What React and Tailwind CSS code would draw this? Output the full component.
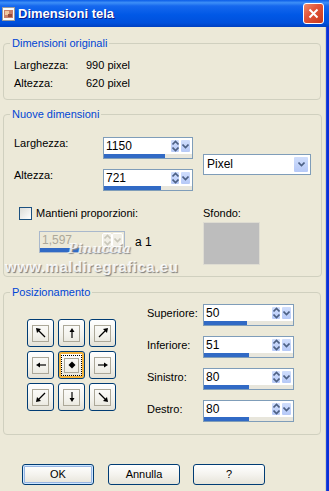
import React from 'react'

function Chevron({ up }) {
  return (
    <svg width="7" height="5" viewBox="0 0 7 5" className="block">
      <path d={up ? 'M0.5 4.5 L3.5 1.5 L6.5 4.5' : 'M0.5 0.5 L3.5 3.5 L6.5 0.5'} fill="none" stroke="currentColor" strokeWidth="1.6" />
    </svg>
  )
}

function UpDownBtn({ disabled }) {
  return (
    <div className={`w-[10px] my-[1px] flex flex-col items-center justify-center gap-[2px] rounded-[2px] border border-white ${disabled ? 'bg-[#f1efe6] text-[#c9c7ba]' : 'bg-[linear-gradient(180deg,#d0defc,#b6c9f7)] text-[#4d6185]'}`}>
      <Chevron up />
      <Chevron />
    </div>
  )
}

function DropBtn({ disabled, className = '' }) {
  return (
    <div className={`flex items-center justify-center rounded-[2px] border border-white ${disabled ? 'bg-[#f1efe6] text-[#c9c7ba]' : 'bg-[linear-gradient(180deg,#d0defc,#b6c9f7)] text-[#4d6185]'} ${className}`}>
      <Chevron />
    </div>
  )
}

function Spin({ value, fill, className = '', disabled = false }) {
  return (
    <div className={`flex flex-col h-[22px] border ${disabled ? 'border-[#a9b8cc] bg-[#ece9d8]' : 'border-[#7f9db9] bg-white'} ${className}`}>
      <div className="flex flex-1 min-h-0 pr-[1px]">
        <div className={`flex-1 pl-[2px] text-[12px] leading-[17px] ${disabled ? 'text-[#aca899]' : 'text-black'}`}>{value}</div>
        <UpDownBtn disabled={disabled} />
        <DropBtn disabled={disabled} className="w-[11px] my-[1px]" />
      </div>
      <div className="h-[4px] bg-[#e8e6dc]">
        <div className="h-full bg-[#316ac5]" style={{ width: fill }} />
      </div>
    </div>
  )
}

function Arrow({ dir }) {
  const shapes = {
    nw: ['M10 10 L2.5 2.5', '1,1 6,2 2,6'],
    n: ['M6 11 L6 3', '6,1 3.5,5 8.5,5'],
    ne: ['M2 10 L9.5 2.5', '11,1 6,2 10,6'],
    w: ['M11 6 L3 6', '1,6 5,3.5 5,8.5'],
    e: ['M1 6 L9 6', '11,6 7,3.5 7,8.5'],
    sw: ['M10 2 L2.5 9.5', '1,11 2,6 6,10'],
    s: ['M6 1 L6 9', '6,11 3.5,7 8.5,7'],
    se: ['M2 2 L9.5 9.5', '11,11 6,10 10,6'],
  }
  if (dir === 'c') {
    return (
      <svg width="12" height="12" viewBox="0 0 12 12" className="block">
        <polygon points="6,2.5 9.5,6 6,9.5 2.5,6" fill="black" />
      </svg>
    )
  }
  const [d, pts] = shapes[dir]
  return (
    <svg width="12" height="12" viewBox="0 0 12 12" className="block">
      <path d={d} stroke="black" strokeWidth="1.2" fill="none" />
      <polygon points={pts} fill="black" />
    </svg>
  )
}

function PosBtn({ dir, active }) {
  return (
    <div className={`w-[27px] h-[28px] rounded-[3px] border border-[#003c74] flex items-center justify-center bg-[linear-gradient(180deg,#ffffff_0%,#f3f2ec_60%,#e3e1d6_100%)] ${active ? 'shadow-[inset_0_0_0_2px_#f6b53c]' : ''}`}>
      {active ? (
        <div className="w-[21px] h-[21px] border border-dotted border-black flex items-center justify-center">
          <div className="w-[15px] h-[15px] border border-[#aca899] flex items-center justify-center">
            <Arrow dir={dir} />
          </div>
        </div>
      ) : (
        <div className="w-[17px] h-[17px] border border-[#aca899] flex items-center justify-center">
          <Arrow dir={dir} />
        </div>
      )}
    </div>
  )
}

function Group({ title, className = '', children }) {
  return (
    <fieldset className={`w-[318px] border border-[#d0d0bf] rounded-[4px] px-[10px] ${className}`}>
      <legend className="-ml-[4px] px-[2px] leading-[13px] text-[#0046d5]">{title}</legend>
      {children}
    </fieldset>
  )
}

function DialogButton({ children, isDefault }) {
  return (
    <button className={`w-[72px] h-[21px] rounded-[3px] border border-[#003c74] bg-[linear-gradient(180deg,#ffffff_0%,#f4f3ee_50%,#e6e4d9_100%)] text-black text-[11px] leading-none ${isDefault ? 'shadow-[inset_0_0_0_1px_#cee7ff,inset_0_0_0_2px_#98b5e2]' : ''}`}>
      {children}
    </button>
  )
}

export default function App() {
  const posRight = [
    { label: 'Superiore:', value: '50', fill: 43 },
    { label: 'Inferiore:', value: '51', fill: 45 },
    { label: 'Sinistro:', value: '80', fill: 45 },
    { label: 'Destro:', value: '80', fill: 45 },
  ]
  const grid = ['nw', 'n', 'ne', 'w', 'c', 'e', 'sw', 's', 'se']

  return (
    <div className="w-[329px] h-[491px] flex flex-col overflow-hidden bg-[#0a2fd4] font-['Liberation_Sans',Arial,sans-serif] text-[11px] text-black">
      {/* Title bar */}
      <div className="h-[27px] flex items-center bg-[linear-gradient(180deg,#0a5ce8_0%,#3d8ff7_10%,#1668ee_22%,#0058e6_55%,#0050dc_85%,#0040c0_100%)]">
        <svg width="14" height="14" viewBox="0 0 14 14" className="ml-[2px] mt-[1px]">
          <rect x="0.5" y="0.5" width="12" height="13" fill="#fbfbf8" stroke="#9a9a9a" />
          <rect x="2" y="3" width="9" height="8" fill="#c9806a" />
          <rect x="3" y="4" width="4" height="4" fill="#f0c8a0" />
          <rect x="6" y="7" width="4" height="3" fill="#9a4c3a" />
        </svg>
        <span className="ml-[2px] text-white font-bold text-[13px] [text-shadow:1px_1px_0_#0a1a8a]">Dimensioni tela</span>
        <div className="ml-auto mr-[5px] w-[21px] h-[21px] rounded-[3px] border border-white flex items-center justify-center bg-[linear-gradient(135deg,#f08a6a_0%,#e2563a_40%,#c8381c_100%)]">
          <svg width="11" height="11" viewBox="0 0 11 11">
            <path d="M1.5 1.5 L9.5 9.5 M9.5 1.5 L1.5 9.5" stroke="white" strokeWidth="2" />
          </svg>
        </div>
      </div>

      <div className="flex flex-1 min-h-0">
        <div className="relative w-[326px] bg-[#ece9d8] pl-[3px] border-r border-[#d6d3c3]">
          <Group title="Dimensioni originali" className="mt-[10px] pt-[6px] pb-[7px]">
            <div className="flex leading-[18px]">
              <span className="w-[72px]">Larghezza:</span>
              <span>990 pixel</span>
            </div>
            <div className="flex leading-[18px]">
              <span className="w-[72px]">Altezza:</span>
              <span>620 pixel</span>
            </div>
          </Group>

          <Group title="Nuove dimensioni" className="mt-[8px] pt-[16px] pb-[11px]">
            <div className="flex">
              <div className="flex flex-col gap-[10px]">
                <div className="flex items-start h-[22px]">
                  <span className="w-[89px] -mt-[1px] leading-[14px]">Larghezza:</span>
                  <Spin value="1150" fill={61} className="w-[90px]" />
                </div>
                <div className="flex items-start h-[22px]">
                  <span className="w-[89px] -mt-[1px] leading-[14px]">Altezza:</span>
                  <Spin value="721" fill={57} className="w-[90px]" />
                </div>
              </div>
              <div className="ml-[10px] mt-[17px] w-[108px] h-[21px] border border-[#7f9db9] bg-white flex pr-[1px]">
                <span className="flex-1 pl-[3px] text-[12px] leading-[19px]">Pixel</span>
                <DropBtn className="w-[16px] my-[1px]" />
              </div>
            </div>

            <div className="flex mt-[15px]">
              <div className="w-[189px]">
                <div className="flex items-center h-[14px]">
                  <div className="ml-[5px] w-[13px] h-[13px] border border-[#1c5180] bg-[linear-gradient(135deg,#dcdcd7,#ffffff)]" />
                  <span className="ml-[4px]">Mantieni proporzioni:</span>
                </div>
                <div className="flex items-center mt-[11px] ml-[25px]">
                  <Spin value="1,597" fill={40} disabled className="w-[86px]" />
                  <span className="ml-[10px] text-[12px]">a 1</span>
                </div>
              </div>
              <div>
                <div className="h-[14px] leading-[14px]">Sfondo:</div>
                <div className="mt-[2px] w-[57px] h-[43px] bg-[#bdbdbd] border border-[#dedcd2]" />
              </div>
            </div>
          </Group>

          <Group title="Posizionamento" className="mt-[9px] pt-[5px] pb-[12px]">
            <div className="flex">
              <div className="ml-[13px] mt-[15px] grid grid-cols-3 gap-[4px] self-start">
                {grid.map((d) => (
                  <PosBtn key={d} dir={d} active={d === 'c'} />
                ))}
              </div>
              <div className="ml-[31px] flex flex-col gap-[10px]">
                {posRight.map((r) => (
                  <div key={r.label} className="flex items-center h-[22px]">
                    <span className="w-[56px] -mt-[3px]">{r.label}</span>
                    <Spin value={r.value} fill={r.fill} className="w-[91px]" />
                  </div>
                ))}
              </div>
            </div>
          </Group>

          <div className="flex mt-[29px] ml-[19px]">
            <DialogButton isDefault>OK</DialogButton>
            <div className="ml-[14px]">
              <DialogButton>Annulla</DialogButton>
            </div>
            <div className="ml-[13px]">
              <DialogButton>?</DialogButton>
            </div>
          </div>

          {/* watermark */}
          <div className="absolute left-[68px] top-[212px] text-[13px] font-bold italic text-white/80 [text-shadow:1px_1px_1px_#8a8a8a] font-['DejaVu_Serif',serif] pointer-events-none">
            Pinuccia
          </div>
          <div className="absolute left-[5px] top-[229px] text-[15px] font-bold text-white/85 tracking-[0.5px] [text-shadow:1px_1px_1px_#7a7a7a] pointer-events-none">
            www.maldiregrafica.eu
          </div>
        </div>
        <div className="flex-1 border-l border-[#1e44e0]" />
      </div>
    </div>
  )
}
